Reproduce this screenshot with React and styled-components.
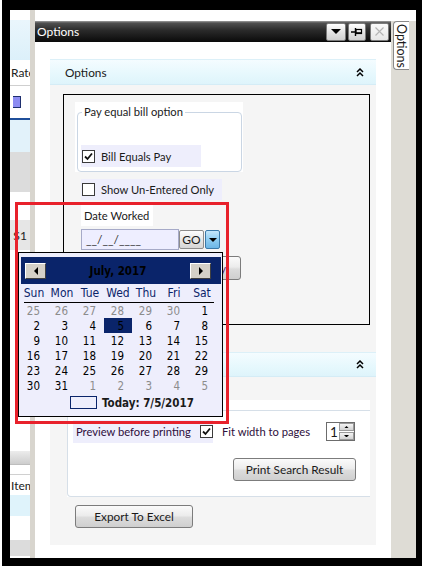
import React from "react";
import styled, { createGlobalStyle } from "styled-components";

const GlobalStyle = createGlobalStyle`
    html, body {
        margin: 0;
        padding: 0;
        background: #fff;
    }
    * {
        box-sizing: border-box;
    }
`;

const Screen = styled.div`
    position: relative;
    width: 426px;
    height: 572px;
    overflow: hidden;
    background: #fff;
    font-family: Lato, "Open Sans", sans-serif;
    font-size: 11.2px;
    color: #1a1a1a;
`;

const Shot = styled.div`
    margin-left: 2px;
    width: 420px;
    height: 566px;
    border-style: solid;
    border-color: #000;
    border-width: 10px 6px 8px 8px;
    display: flex;
    background: #fff;
`;

/* ---------- app that sits behind the docked panel ---------- */
const BackStrip = styled.div`
    width: 20px;
    display: flex;
    flex-direction: column;
    overflow: hidden;
`;
const StripBlock = styled.div`
    flex: none;
    height: ${(p) => p.h}px;
    background: ${(p) => p.bg || "#fff"};
    border-bottom: ${(p) => (p.line ? `${p.lineW || 1}px solid ${p.line}` : "none")};
    display: flex;
    align-items: center;
    white-space: nowrap;
    color: #222;
    font-size: 12px;
`;
const StripText = styled.span`
    margin-left: ${(p) => p.ml || 2}px;
`;
const MiniBox = styled.div`
    width: 8px;
    height: 12px;
    margin-left: 3px;
    background: #8c8cf2;
    border: 1px solid #1e2f6e;
    border-left: none;
`;
const Splitter = styled.div`
    width: 5px;
    background: #d8d5ce;
`;

/* ---------- dock panel ---------- */
const Dock = styled.div`
    width: 356px;
    display: flex;
    flex-direction: column;
    padding-top: 11px;
    background: #fff;
`;
const TitleBar = styled.div`
    height: 21px;
    display: flex;
    align-items: center;
    gap: 2px;
    padding: 0 2px 0 2px;
    background: linear-gradient(#a0a0a0 0, #505050 2px, #2a2a2a 45%, #0a0a0a 100%);
    color: #fff;
`;
const TitleText = styled.span`
    flex: 1;
    font-size: 12px;
`;
const CapButton = styled.div`
    width: ${(p) => p.w}px;
    height: 18px;
    margin-left: ${(p) => p.ml || 0}px;
    border: 1px solid #7a7a7a;
    border-radius: 2px;
    background: ${(p) =>
        p.disabled
            ? "linear-gradient(#fafafa, #e6e6e6)"
            : "linear-gradient(#ffffff, #e2e2e2 55%, #cfcfcf)"};
    display: flex;
    align-items: center;
    justify-content: center;
`;
const DockBody = styled.div`
    flex: 1;
    padding: 17px 15px 13px 15px;
`;
const Content = styled.div`
    height: 100%;
    background: #f5f5f5;
    display: flex;
    flex-direction: column;
`;
const SectionHeader = styled.div`
    flex: none;
    height: ${(p) => p.h || 26}px;
    margin-top: ${(p) => p.mt || 0}px;
    display: flex;
    align-items: center;
    justify-content: space-between;
    padding: 0 12px 0 15px;
    border-top: 1px solid #dcf0f8;
    border-bottom: 1px solid #d4ecf6;
    background: linear-gradient(#f4fcff, #e6f8fd 60%, #def4fb);
    color: #1a1a1a;
    font-size: 11.8px;
`;
const OuterBox = styled.div`
    flex: none;
    height: 231px;
    margin: 9px 6px 0 13px;
    border: 1px solid #000;
    padding: 7px 0 0 11px;
    display: flex;
    flex-direction: column;
    align-items: flex-start;
`;
const GroupWrap = styled.div`
    width: 168px;
    height: 70px;
    background: #fff;
    padding: 2px 1px 0 2px;
`;
const GroupSet = styled.fieldset`
    margin: 0;
    height: 68px;
    border: 1px solid #cad6e4;
    border-radius: 4px;
    padding: 0 0 0 3px;
`;
const Legend = styled.legend`
    padding: 0 2px;
    margin-left: 1px;
    line-height: 16px;
    color: #1a1a1a;
`;
const CheckRow = styled.div`
    display: flex;
    align-items: center;
    width: ${(p) => p.w}px;
    height: ${(p) => p.h || 22}px;
    margin-top: ${(p) => p.mt || 0}px;
    margin-left: ${(p) => p.ml || 0}px;
    padding-left: ${(p) => p.pl || 1}px;
    gap: ${(p) => p.gap || 6}px;
    background: #eeeefc;
    color: ${(p) => p.color || "#1a1a1a"};
    white-space: nowrap;
`;
const Check = styled.div`
    flex: none;
    width: 13px;
    height: 13px;
    border: 1px solid #3a3a3a;
    background: #fff;
    display: flex;
    align-items: center;
    justify-content: center;
`;
const FieldLabel = styled.div`
    margin: 5px 0 0 6px;
    width: 72px;
    height: 21px;
    background: #fff;
    display: flex;
    align-items: center;
    padding-left: 3px;
    white-space: nowrap;
`;
const DateRow = styled.div`
    margin: 3px 0 0 6px;
    display: flex;
    align-items: center;
    height: 21px;
`;
const DateInput = styled.div`
    width: 98px;
    height: 21px;
    border: 1px solid #a6aac8;
    background: #eeeeff;
    display: flex;
    align-items: center;
    padding-left: 4px;
    color: #333;
    font-size: 12px;
`;
const GoButton = styled.div`
    width: 25px;
    height: 19px;
    border: 1px solid #8c8c8c;
    border-radius: 2px;
    background: linear-gradient(#fdfdfd, #e4e4e4 60%, #d6d6d6);
    display: flex;
    align-items: center;
    justify-content: center;
    font-size: 12px;
`;
const DropButton = styled.div`
    width: 15px;
    height: 19px;
    margin-left: 1px;
    border: 1px solid #3b79a8;
    border-radius: 2px;
    background: linear-gradient(#c4e6fa, #8fcdf2 50%, #6cb6e6);
    display: flex;
    align-items: center;
    justify-content: center;
`;
const PushButton = styled.div`
    flex: none;
    width: ${(p) => p.w}px;
    height: ${(p) => p.h || 24}px;
    margin: ${(p) => p.m || 0};
    border: 1px solid #7c7c7c;
    border-radius: 3px;
    background: linear-gradient(#fbfbfb, #ececec 45%, #dcdcdc 55%, #cfcfcf);
    display: flex;
    align-items: center;
    justify-content: ${(p) => p.justify || "center"};
    padding-right: ${(p) => p.pr || 0}px;
    color: ${(p) => p.color || "#1a1a1a"};
    white-space: nowrap;
    overflow: hidden;
    font-size: 11.8px;
`;
const GroupWrap2 = styled.div`
    flex: none;
    margin: 23px 6px 0 17px;
    padding-top: 10px;
    background: #fff;
`;
const Group2 = styled.div`
    height: 87px;
    border: 1px solid #d6dfe8;
    border-right: none;
    border-radius: 4px 0 0 4px;
    padding: 9px 0 0 5px;
    display: flex;
    flex-direction: column;
`;
const PrintRow = styled.div`
    display: flex;
    align-items: center;
    height: 23px;
`;
const PlainLabel = styled.span`
    margin-left: 9px;
    width: 104px;
    color: #2e0f3c;
    white-space: nowrap;
`;
const Spinner = styled.div`
    width: 29px;
    height: 19px;
    border: 1px solid #6c6c6c;
    background: #fff;
    display: flex;
    align-items: center;
    justify-content: space-between;
    padding-left: 3px;
    font-size: 13.5px;
`;
const SpinArrows = styled.div`
    width: 15px;
    height: 17px;
    display: flex;
    flex-direction: column;
    gap: 1px;
`;
const SpinHalf = styled.div`
    flex: 1;
    background: linear-gradient(#f4f4f4, #d2d2d2);
    border: 1px solid #9a9a9a;
    display: flex;
    align-items: center;
    justify-content: center;
`;

/* ---------- right auto-hide rail ---------- */
const Rail = styled.div`
    width: 25px;
    display: flex;
    flex-direction: column;
`;
const RailTop = styled.div`
    height: 11px;
    background: #fff;
`;
const RailBody = styled.div`
    flex: 1;
    background: #dedcd5;
    padding-left: 2px;
`;
const RailTab = styled.div`
    height: 49px;
    background: #fff;
    border: 1px solid #8a8a8a;
    border-right: none;
    border-radius: 4px 0 0 4px;
    writing-mode: vertical-rl;
    display: flex;
    align-items: center;
    justify-content: center;
    color: #1a1a1a;
    font-size: 12.5px;
`;

/* ---------- calendar popup ---------- */
const Calendar = styled.div`
    position: absolute;
    left: 18px;
    top: 252px;
    width: 205px;
    height: 165px;
    border: 1px solid #000;
    background: #eeeefc;
    padding: 4px 1px 0 2px;
    font-family: "DejaVu Sans Condensed", "DejaVu Sans", sans-serif;
    font-size: 11.5px;
    z-index: 2;
`;
const CalHead = styled.div`
    height: 27px;
    background: #0a246a;
    display: flex;
    align-items: center;
    justify-content: space-between;
    padding: 0 10px 0 4px;
`;
const NavButton = styled.div`
    width: 21px;
    height: 16px;
    background: #d4d0c8;
    border: 1px solid;
    border-color: #fff #404040 #404040 #fff;
    display: flex;
    align-items: center;
    justify-content: center;
`;
const MonthTitle = styled.span`
    font-weight: bold;
    font-size: 11.5px;
    color: #000;
`;
const Grid = styled.div`
    display: grid;
    grid-template-columns: repeat(7, 28px);
    margin-left: -1px;
`;
const DayName = styled.div`
    height: 18px;
    display: flex;
    align-items: center;
    justify-content: center;
    color: #0a246a;
    font-size: 12px;
`;
const HeadRule = styled.div`
    height: 1px;
    background: #000;
    margin: 0 7px 0 3px;
`;
const DayCell = styled.div`
    height: 15px;
    display: flex;
    align-items: center;
    justify-content: flex-end;
    padding-right: 8px;
    background: ${(p) => (p.selected ? "#0a246a" : "transparent")};
    color: ${(p) => (p.muted ? "#8c8c8c" : "#000")};
`;
const TodayRow = styled.div`
    margin-top: 3px;
    height: 13px;
    display: flex;
    align-items: center;
    padding-left: 49px;
    gap: 5px;
`;
const TodayBox = styled.div`
    width: 27px;
    height: 13px;
    border: 1px solid #0a246a;
`;
const TodayText = styled.span`
    font-weight: bold;
`;

const Highlight = styled.div`
    position: absolute;
    left: 15px;
    top: 202px;
    width: 214px;
    height: 222px;
    border: 3px solid #e8212b;
    z-index: 3;
    pointer-events: none;
`;

const CheckMark = () => (
    <svg width="9" height="9" viewBox="0 0 9 9">
        <path d="M1 4.5 L3.5 7 L8 1.5" fill="none" stroke="#111" strokeWidth="1.8" />
    </svg>
);

const Chevrons = () => (
    <svg width="8" height="9" viewBox="0 0 8 9">
        <path d="M1 4 L4 1 L7 4 M1 8 L4 5 L7 8" fill="none" stroke="#000" strokeWidth="1.5" />
    </svg>
);

const Tri = ({ dir = "down", size = 4, color = "#000" }) => {
    const s = size;
    const pts = {
        down: `0,0 ${2 * s},0 ${s},${s}`,
        up: `0,${s} ${2 * s},${s} ${s},0`,
        left: `${s},0 ${s},${2 * s} 0,${s}`,
        right: `0,0 0,${2 * s} ${s},${s}`,
    }[dir];
    const w = dir === "left" || dir === "right" ? s : 2 * s;
    const h = dir === "left" || dir === "right" ? 2 * s : s;
    return (
        <svg width={w} height={h} viewBox={`0 0 ${w} ${h}`}>
            <polygon points={pts} fill={color} />
        </svg>
    );
};

const PinIcon = () => (
    <svg width="12" height="10" viewBox="0 0 12 10">
        <path d="M0 5 H4 M4.5 1 V9" stroke="#000" strokeWidth="1.4" fill="none" />
        <rect x="5" y="2.5" width="5.5" height="4" fill="none" stroke="#000" strokeWidth="1.2" />
        <path d="M5 6 H11" stroke="#000" strokeWidth="1.6" />
    </svg>
);

const CloseIcon = () => (
    <svg width="9" height="9" viewBox="0 0 9 9">
        <path d="M0.5 0.5 L8.5 8.5 M8.5 0.5 L0.5 8.5" stroke="#b4b4b4" strokeWidth="1.1" />
    </svg>
);

const weeks = [
    [25, 26, 27, 28, 29, 30, 1],
    [2, 3, 4, 5, 6, 7, 8],
    [9, 10, 11, 12, 13, 14, 15],
    [16, 17, 18, 19, 20, 21, 22],
    [23, 24, 25, 26, 27, 28, 29],
    [30, 31, 1, 2, 3, 4, 5],
];
const dayNames = ["Sun", "Mon", "Tue", "Wed", "Thu", "Fri", "Sat"];

const DatePopup = () => (
    <Calendar>
        <CalHead>
            <NavButton>
                <Tri dir="left" size={4} />
            </NavButton>
            <MonthTitle>July, 2017</MonthTitle>
            <NavButton>
                <Tri dir="right" size={4} />
            </NavButton>
        </CalHead>
        <Grid>
            {dayNames.map((d) => (
                <DayName key={d}>{d}</DayName>
            ))}
        </Grid>
        <HeadRule />
        <Grid>
            {weeks.map((w, wi) =>
                w.map((d, di) => {
                    const muted = (wi === 0 && d > 20) || (wi === 5 && d < 10);
                    return (
                        <DayCell
                            key={`${wi}-${di}`}
                            muted={muted}
                            selected={wi === 1 && d === 5}
                        >
                            {d}
                        </DayCell>
                    );
                })
            )}
        </Grid>
        <TodayRow>
            <TodayBox />
            <TodayText>Today: 7/5/2017</TodayText>
        </TodayRow>
    </Calendar>
);

export default function App() {
    return (
        <Screen>
            <GlobalStyle />
            <Shot>
                <BackStrip>
                    <StripBlock h={10} />
                    <StripBlock h={40} bg="linear-gradient(#eaf6fc, #dcf0fa)" />
                    <StripBlock h={26} line="#cfcfcf">
                        <StripText ml={1}>Rates</StripText>
                    </StripBlock>
                    <StripBlock h={34} line="#1f4f9a" lineW={2}>
                        <MiniBox />
                    </StripBlock>
                    <StripBlock h={32} bg="#e2f2fa" />
                    <StripBlock h={40} bg="#dcdcdc" />
                    <StripBlock h={28} />
                    <StripBlock h={30} bg="#e6e6e6">
                        <StripText ml={3}>$1</StripText>
                    </StripBlock>
                    <StripBlock h={201} />
                    <StripBlock h={14} bg="linear-gradient(#ececec, #cdcdcd)" line="#bdbdbd" />
                    <StripBlock h={10} line="#d0d0d0" />
                    <StripBlock h={20}>
                        <StripText ml={1}>Item</StripText>
                    </StripBlock>
                    <StripBlock h={21} bg="#dff3fb" />
                    <StripBlock h={24} />
                    <StripBlock h={16} bg="#dcdcdc" />
                </BackStrip>
                <Splitter />
                <Dock>
                    <TitleBar>
                        <TitleText>Options</TitleText>
                        <CapButton w={20}>
                            <Tri dir="down" size={5} />
                        </CapButton>
                        <CapButton w={18}>
                            <PinIcon />
                        </CapButton>
                        <CapButton w={19} ml={2} disabled>
                            <CloseIcon />
                        </CapButton>
                    </TitleBar>
                    <DockBody>
                        <Content>
                            <SectionHeader>
                                <span>Options</span>
                                <Chevrons />
                            </SectionHeader>
                            <OuterBox>
                                <GroupWrap>
                                    <GroupSet>
                                        <Legend>Pay equal bill option</Legend>
                                        <CheckRow w={120} mt={25} ml={0}>
                                            <Check>
                                                <CheckMark />
                                            </Check>
                                            <span>Bill Equals Pay</span>
                                        </CheckRow>
                                    </GroupSet>
                                </GroupWrap>
                                <CheckRow w={141} h={21} mt={7} ml={6}>
                                    <Check />
                                    <span>Show Un-Entered Only</span>
                                </CheckRow>
                                <FieldLabel>Date Worked</FieldLabel>
                                <DateRow>
                                    <DateInput>__/__/____</DateInput>
                                    <GoButton>GO</GoButton>
                                    <DropButton>
                                        <Tri dir="down" size={4} />
                                    </DropButton>
                                </DateRow>
                                <PushButton w={91} m="6px 0 0 75px" justify="flex-end" pr={14} color="#5a2a7a">
                                    Apply
                                </PushButton>
                            </OuterBox>
                            <SectionHeader mt={27} h={25}>
                                <span />
                                <Chevrons />
                            </SectionHeader>
                            <GroupWrap2>
                                <Group2>
                                    <PrintRow>
                                        <CheckRow w={140} h={23} pl={3} gap={6} color="#2e0f3c">
                                            <span style={{ width: 120 }}>Preview before printing</span>
                                            <Check>
                                                <CheckMark />
                                            </Check>
                                        </CheckRow>
                                        <PlainLabel>Fit width to pages</PlainLabel>
                                        <Spinner>
                                            1
                                            <SpinArrows>
                                                <SpinHalf>
                                                    <Tri dir="up" size={2.5} />
                                                </SpinHalf>
                                                <SpinHalf>
                                                    <Tri dir="down" size={2.5} />
                                                </SpinHalf>
                                            </SpinArrows>
                                        </Spinner>
                                    </PrintRow>
                                    <PushButton w={123} h={23} m="15px 14px 0 auto">
                                        Print Search Result
                                    </PushButton>
                                </Group2>
                            </GroupWrap2>
                            <PushButton w={118} h={23} m="8px 0 0 25px">
                                Export To Excel
                            </PushButton>
                        </Content>
                    </DockBody>
                </Dock>
                <Rail>
                    <RailTop />
                    <RailBody>
                        <RailTab>Options</RailTab>
                    </RailBody>
                </Rail>
            </Shot>
            <DatePopup />
            <Highlight />
        </Screen>
    );
}
